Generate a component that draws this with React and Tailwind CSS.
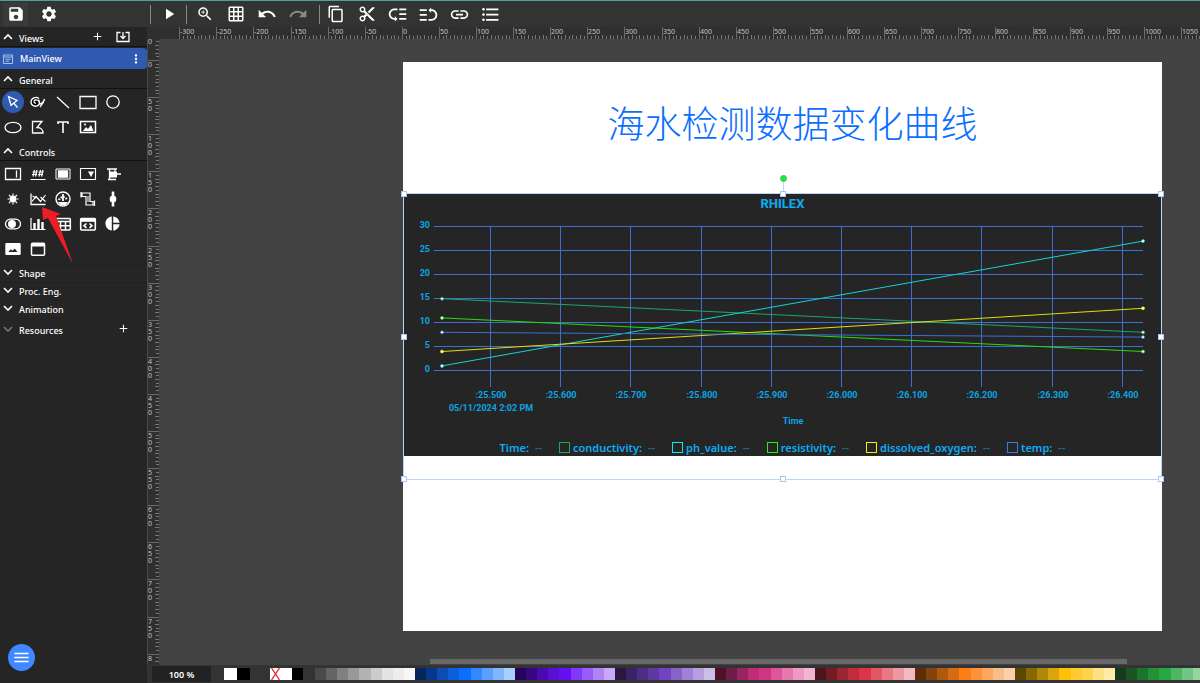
import {
  MdSave,
  MdSettings,
  MdPlayArrow,
  MdZoomIn,
  MdGridOn,
  MdUndo,
  MdRedo,
  MdContentCopy,
  MdContentCut,
  MdLowPriority,
  MdLink,
  MdFormatListBulleted,
  MdPieChart,
  MdAdd,
  MdMoreVert,
  MdMenu,
} from "react-icons/md";
import clsx from "clsx";

// Ruler scale
const STEP = 37.1; // screen px for 50 canvas units
const MINOR = STEP / 10;

const SERIES = [
  { name: "conductivity", color: "#1aa866", from: 15, to: 8, box: "border-[#1aa866]" },
  { name: "ph_value", color: "#16d3d3", from: 1, to: 27, box: "border-[#0fe8f0]" },
  { name: "resistivity", color: "#27dd0b", from: 11, to: 4, box: "border-[#27f00b]" },
  { name: "dissolved_oxygen", color: "#dede10", from: 4, to: 13, box: "border-[#eeee10]" },
  { name: "temp", color: "#3d6fd1", from: 8, to: 7, box: "border-[#3d78e8]" },
];

const TIMES = [":25.500", ":25.600", ":25.700", ":25.800", ":25.900", ":26.000", ":26.100", ":26.200", ":26.300", ":26.400"];

const PALETTE = [
  ["#4a4a4a", "#646464", "#808080", "#999999", "#b3b3b3", "#cccccc", "#e3e3e3", "#ededed", "#f8f8f8"],
  ["#03265b", "#07378a", "#0b4db4", "#0c5fdb", "#0a6eff", "#3488ff", "#5c9fff", "#83b5ff", "#a9cfff"],
  ["#25045c", "#37077f", "#4a0ab0", "#5810d4", "#6610f2", "#8138f7", "#985df8", "#b084f6", "#c8a8f8"],
  ["#28183f", "#3a2468", "#4c2f85", "#5d39a0", "#7242c0", "#8862ca", "#a080d8", "#b59fdf", "#cbbfe8"],
  ["#4f1028", "#701c48", "#982460", "#be2d76", "#d03485", "#de5598", "#e678ae", "#ee98c4", "#f2b6d0"],
  ["#4c141c", "#741c26", "#9a2632", "#c02c3c", "#dd3545", "#e25664", "#e87882", "#ee98a2", "#f4bac4"],
  ["#5c2e08", "#86420c", "#ae5810", "#d66c12", "#fd7e14", "#fd9338", "#fda85e", "#f6be88", "#fcd0ac"],
  ["#5c4702", "#866804", "#b08706", "#daa50a", "#ffc107", "#ffcb30", "#ffd24e", "#ffe082", "#ffeaa8"],
  ["#133a1a", "#1b5524", "#1c732c", "#249038", "#28a745", "#4cb665", "#70c584", "#94d4a3", "#b8e3c2"],
];

function Glyph({ children, fill }) {
  return (
    <svg
      viewBox="0 0 18 18"
      className="h-[18px] w-[18px]"
      fill={fill ? "white" : "none"}
      stroke={fill ? "none" : "white"}
      strokeWidth="1.3"
      aria-hidden="true"
    >
      {children}
    </svg>
  );
}

const GENERAL = [
  {
    label: "Select",
    active: true,
    icon: <Glyph><path d="M4.500 3.500l8.500 4-6 4.800zM9.500 9.800l4 4.700" /></Glyph>,
  },
  {
    label: "Pencil",
    icon: (
      <Glyph>
        <circle cx="6" cy="9" r="3.600" fill="black" strokeWidth="0" />
        <path d="M10 5.500C7 3 2 5 2 9s5 5.500 7.500 3S9 6.500 6.500 7 5 10.500 7 10M9.500 7c1 0 .5 4 2 4s3.500-3 4-5c-.5 3-2.500 6-4.500 8" />
      </Glyph>
    ),
  },
  { label: "Line", icon: <Glyph><path d="M3 4l12 11" /></Glyph> },
  { label: "Rectangle", icon: <Glyph><path d="M1 3.500h16v12H1z" /></Glyph> },
  { label: "Circle", icon: <Glyph><circle cx="9" cy="9" r="6.200" /></Glyph> },
  { label: "Ellipse", icon: <Glyph><ellipse cx="9" cy="9.500" rx="8" ry="5.200" /></Glyph> },
  { label: "Path", icon: <Glyph><path d="M3.500 3.500H13L8 9.500c3.500-.2 6 2 6 5.500H3.500z" /></Glyph> },
  { label: "Text", icon: <Glyph><path d="M4 6V4h10v2M9 4v11" strokeWidth="1.600" /></Glyph> },
  {
    label: "Image",
    icon: (
      <Glyph>
        <path d="M1.500 3.500h15v11h-15z" strokeWidth="1.500" />
        <path d="M4 13l3-4 2 2 3-4 2.500 6z" fill="white" stroke="none" />
        <circle cx="6" cy="6.500" r="1" fill="white" stroke="none" />
      </Glyph>
    ),
  },
];

const CONTROLS = [
  { label: "Input", icon: <Glyph><path d="M1.500 3.500h15v11h-15zM12.500 5.500v7" /></Glyph> },
  { label: "Output", icon: <Glyph><path d="M5.500 5L4 11.500M8 5l-1.500 6.500M3.500 7h5M3 9.500h5M11.500 5L10 11.500M14 5l-1.500 6.500M9.500 7h5M9 9.500h5" strokeWidth="1.200" /><path d="M1.500 14.500h15" strokeWidth="1" /></Glyph> },
  { label: "Button", icon: <Glyph><path d="M2 4h14v10H2z" strokeWidth="1" /><path d="M4.500 6h9v6h-9z" fill="white" stroke="white" /></Glyph> },
  { label: "Combo box", icon: <Glyph><path d="M1.500 3.500h15v11h-15z" strokeWidth="1.100" /><path d="M9 6.500h6l-3 5.500z" fill="white" stroke="none" /></Glyph> },
  { label: "Slider", icon: <Glyph><path d="M3 4h10M5.500 4v11M4 14.500h8M11 4v3M13 9h4" /><path d="M5 6.500h8v6H5z" fill="white" stroke="none" /></Glyph> },
  {
    label: "Light",
    icon: (
      <Glyph>
        <circle cx="9" cy="9" r="3.400" fill="white" stroke="none" />
        <path d="M9 3.500v2M9 12.500v2M3.500 9h2M12.500 9h2M5 5l1.500 1.500M11.500 11.500L13 13M13 5l-1.500 1.500M6.500 11.500L5 13" strokeWidth="1.200" />
      </Glyph>
    ),
  },
  { label: "Chart", icon: <Glyph><path d="M2 3.500v11h14.500" /><path d="M3 11.500l4-5 4.500 5 5-6.500M3.500 6L7 8M11.500 7l5 4.500" strokeWidth="1.200" /></Glyph> },
  {
    label: "Gauge",
    icon: (
      <Glyph>
        <circle cx="9" cy="9" r="7" strokeWidth="1.400" />
        <path d="M5 10a4.200 4.200 0 0 1 8 0" strokeWidth="2" strokeDasharray="1.500 1.200" />
        <path d="M9 4v7" strokeWidth="1.800" />
        <path d="M4 12h10l-2.500 3h-5z" fill="white" stroke="none" />
      </Glyph>
    ),
  },
  {
    label: "Pipe",
    icon: (
      <Glyph>
        <path d="M3 3h8v8.500h3v3.500H7V6.500H3zM2 2v5.500M11 2.500v2M15.500 10.500V16M7 15h8" strokeWidth="1.200" />
        <path d="M9 6v6" strokeWidth="1" />
      </Glyph>
    ),
  },
  { label: "Progress", icon: <Glyph><path d="M9 1.500v15" strokeWidth="2.600" /><rect x="5.800" y="5.800" width="6.400" height="6.400" rx="2.500" fill="white" stroke="none" /></Glyph> },
  {
    label: "Switch",
    icon: (
      <Glyph>
        <rect x="1.500" y="4.200" width="15" height="9.600" rx="4.800" />
        <circle cx="8" cy="9" r="4" fill="white" stroke="none" />
      </Glyph>
    ),
  },
  { label: "Bar chart", icon: <Glyph><path d="M2 3v11.500h14.500" strokeWidth="1.200" /><path d="M5.500 14V8M9.500 14V4M13.500 14V7" strokeWidth="2.400" /></Glyph> },
  { label: "Table", icon: <Glyph><rect x="1.700" y="3.500" width="14.600" height="11.500" rx="1" strokeWidth="1.600" /><path d="M2 6.500h14M2 10.700h14M6.500 6v9M11.500 6v9" strokeWidth="1.500" /></Glyph> },
  {
    label: "Iframe",
    icon: (
      <Glyph>
        <rect x="1.700" y="3.500" width="14.600" height="11.500" rx="1" strokeWidth="1.600" />
        <path d="M1.500 3h15v3.800h-15z" fill="white" stroke="none" />
        <path d="M7.500 8.500L5 10.700l2.500 2.200M10.500 8.500L13 10.700l-2.500 2.200" strokeWidth="1.600" />
      </Glyph>
    ),
  },
  { label: "Pie chart", icon: <MdPieChart className="h-[17px] w-[17px]" /> },
  { label: "Picture", icon: <Glyph fill><path fillRule="evenodd" d="M2.500 3h13a1.200 1.200 0 0 1 1.200 1.200v9.600a1.200 1.200 0 0 1-1.200 1.200h-13a1.200 1.200 0 0 1-1.200-1.200V4.200A1.200 1.200 0 0 1 2.500 3zM4.500 12h9l-2.800-3.500-2.200 2.300-1.700-1.500z" /></Glyph> },
  { label: "Panel", icon: <Glyph><rect x="2.500" y="3.200" width="13" height="12" rx="1" strokeWidth="1.500" /><path d="M2 3h14v3.500H2z" fill="white" stroke="none" /></Glyph> },
];

function Chevron({ open, dim }) {
  return (
    <svg viewBox="0 0 10 10" className="mb-1 h-[10px] w-[10px] shrink-0" fill="none" stroke={dim ? "#777" : "white"} strokeWidth="1.600" aria-hidden="true">
      <path d={open ? "M1 7l4-4 4 4" : "M1 3l4 4 4-4"} />
    </svg>
  );
}

function SectionHeader({ title, children }) {
  return (
    <div className="flex h-5 items-center border-b border-[#111] pt-1 pl-[3px]">
      <button className="flex items-center gap-[6px]">
        <Chevron open />
        {title}
      </button>
      {children}
    </div>
  );
}

function ClosedSection({ title }) {
  return (
    <button className="flex h-[18px] w-full items-center gap-[6px] border-t border-[#212121] pl-[3px]">
      <Chevron />
      {title}
    </button>
  );
}

function ToolGrid({ tools }) {
  return (
    <div className="grid w-[125px] grid-cols-5 pb-[2px]">
      {tools.map((tool) => (
        <button key={tool.label} aria-label={tool.label} className="flex h-[25px] items-center justify-center">
          <span className={clsx("flex h-[22px] w-[22px] items-center justify-center rounded-full", tool.active && "bg-[#2f5ab2]")}>
            {tool.icon}
          </span>
        </button>
      ))}
    </div>
  );
}

function Sidebar() {
  return (
    <aside className="relative flex w-[147px] shrink-0 flex-col bg-[#252525] text-[9px] font-medium">
      <SectionHeader title="Views">
        <button aria-label="Add view" className="mb-1 ml-auto"><MdAdd className="h-[13px] w-[13px]" /></button>
        <button aria-label="Import view" className="mr-[17px] mb-1 ml-3">
          <svg viewBox="0 0 14 12" className="h-[12px] w-[14px]" fill="none" stroke="white" strokeWidth="1.300" aria-hidden="true">
            <path d="M4.500 1.500H1v9h12v-9H9.500M7 1v6M4.500 5L7 7.500 9.500 5" />
          </svg>
        </button>
      </SectionHeader>
      <div className="mt-px flex h-[21px] items-center rounded-r-sm bg-[#2f5ab0] pl-[3px]">
        <svg viewBox="0 0 10 10" className="h-[10px] w-[10px]" fill="none" stroke="#a9c0ea" aria-hidden="true">
          <path d="M.5 1h9v8.500h-9zM.5 3h9M2.500 5.200h5M2.500 7.200h3.500" />
        </svg>
        <a href="#main" className="ml-[7px]">MainView</a>
        <button aria-label="View menu" className="mr-1 ml-auto"><MdMoreVert className="h-[14px] w-[14px]" /></button>
      </div>

      <SectionHeader title="General" />
      <ToolGrid tools={GENERAL} />
      <SectionHeader title="Controls" />
      <ToolGrid tools={CONTROLS} />

      <div className="mt-px">
        <ClosedSection title="Shape" />
        <ClosedSection title="Proc. Eng." />
        <ClosedSection title="Animation" />
        <div className="flex h-6 items-center border-t border-[#212121] pl-[3px]">
          <button className="flex items-center gap-[6px]">
            <Chevron dim />
            Resources
          </button>
          <button aria-label="Add resource" className="mr-[17px] mb-1 ml-auto"><MdAdd className="h-[13px] w-[13px]" /></button>
        </div>
      </div>

      <button aria-label="Menu" className="mt-auto mb-3 ml-2 flex h-[27px] w-[27px] items-center justify-center rounded-full bg-[#3f88ff]">
        <MdMenu className="h-[19px] w-[19px]" />
      </button>

      {/* pointer to the chart control */}
      <svg viewBox="0 0 34 60" className="absolute top-[179px] left-[41px] h-[60px] w-[34px]" aria-hidden="true">
        <path d="M1 1l1 13 5-2 25 46L15 10l5-2z" fill="#ee1c25" />
      </svg>
    </aside>
  );
}

function Separator() {
  return <div className="h-[19px] w-px bg-[#8a8a8a]" />;
}

function ToolButton({ label, dim, children }) {
  return (
    <button aria-label={label} className={clsx("flex h-6 w-[25px] shrink-0 items-center justify-center text-[18px]", dim && "text-[#8a8a8a]")}>
      {children}
    </button>
  );
}

function Toolbar() {
  return (
    <header className="flex h-[27px] shrink-0 items-center border-t border-[#4ba09c] bg-[#333]">
      <div className="flex w-[150px] shrink-0 items-center gap-2 pl-[3px]">
        <span className="bg-[#3a3a3a]"><ToolButton label="Save"><MdSave /></ToolButton></span>
        <ToolButton label="Settings"><MdSettings /></ToolButton>
      </div>
      <Separator />
      <div className="flex w-[35px] justify-center"><ToolButton label="Launch"><MdPlayArrow /></ToolButton></div>
      <Separator />
      <div className="flex w-[132px] items-center gap-[6px] pl-[5px]">
        <ToolButton label="Zoom"><MdZoomIn /></ToolButton>
        <ToolButton label="Grid"><MdGridOn /></ToolButton>
        <ToolButton label="Undo"><MdUndo className="text-[20px]" /></ToolButton>
        <ToolButton label="Redo" dim><MdRedo className="text-[20px]" /></ToolButton>
      </div>
      <Separator />
      <div className="flex items-center gap-[6px] pl-[3px]">
        <ToolButton label="Copy"><MdContentCopy /></ToolButton>
        <ToolButton label="Cut"><MdContentCut /></ToolButton>
        <ToolButton label="Send to back"><MdLowPriority className="text-[21px]" /></ToolButton>
        <ToolButton label="Bring to front"><MdLowPriority className="rotate-180 text-[21px]" /></ToolButton>
        <ToolButton label="Link"><MdLink className="text-[21px]" /></ToolButton>
        <ToolButton label="List"><MdFormatListBulleted className="text-[21px]" /></ToolButton>
      </div>
    </header>
  );
}

function range(from, to) {
  return Array.from({ length: to - from + 1 }, (_, i) => from + i);
}

function HorizontalRuler() {
  const zero = 254.800;
  return (
    <svg className="h-3 w-full shrink-0 bg-[#2f2f2f]" fill="#c4c4c4" aria-hidden="true">
      {range(-60, 500).map((i) => {
        const x = Math.round(zero + i * MINOR);
        const major = i % 10 === 0;
        return <rect key={i} x={x} y={major ? 0 : i % 2 ? 9 : 8} width="1" height="12" fill={major ? "#6a6a6a" : "#777"} />;
      })}
      {range(-6, 21).map((i) => (
        <text key={i} x={Math.round(zero + i * STEP) + 1} y="7" className="text-[7px]">{i * 50}</text>
      ))}
    </svg>
  );
}

function VerticalRuler() {
  const zero = 21;
  return (
    <svg className="h-full w-3 shrink-0 border-l border-[#4a4a4a] bg-[#2f2f2f]" fill="#c4c4c4" aria-hidden="true">
      {range(-5, 400).map((i) => {
        const y = Math.round(zero + i * MINOR);
        const major = i % 10 === 0;
        return <rect key={i} x={major ? 0 : i % 2 ? 8 : 7} y={y} width="12" height="1" fill={major ? "#6a6a6a" : "#777"} />;
      })}
      <text x="0" y="5" className="text-[7px]">0</text>
      {range(0, 16).map((i) =>
        String(i * 50).split("").slice(0, i === 16 ? 1 : 3).map((digit, n) => (
          <text key={`${i}-${n}`} x="0" y={Math.round(zero + i * STEP) + 7 + n * 7} className="text-[7px]">{digit}</text>
        ))
      )}
    </svg>
  );
}

function Plot() {
  const yOf = (v) => Math.round(158.400 - v * 4.800);
  const xOf = (i) => Math.round(87 + i * 70.200);
  return (
    <svg viewBox="0 0 759 226" className="block w-full font-['Roboto',sans-serif] text-[9px] font-bold" fill="#0ba4e4">
      {[0, 5, 10, 15, 20, 25, 30].map((v) => (
        <g key={v}>
          <rect x="31" y={yOf(v) - 1} width="709" height="1" fill="#3d6fd1" />
          <text x="27" y={yOf(v) + 1} textAnchor="end">{v}</text>
        </g>
      ))}
      {TIMES.map((time, i) => (
        <g key={time}>
          <rect x={xOf(i)} y="13" width="1" height="161" fill="#3d6fd1" />
          <text x={xOf(i) + 1} y="185" textAnchor="middle">{time}</text>
        </g>
      ))}
      <text x="88" y="198" textAnchor="middle">05/11/2024 2:02 PM</text>
      <text x="390" y="211" textAnchor="middle">Time</text>
      {SERIES.map((s) => (
        <g key={s.name} stroke={s.color}>
          <line x1="39" y1={157.700 - s.from * 4.800} x2="740" y2={157.700 - s.to * 4.800} strokeWidth="1" />
          <circle cx="39" cy={157.700 - s.from * 4.800} r="1.500" fill="white" strokeWidth=".7" />
          <circle cx="740" cy={157.700 - s.to * 4.800} r="1.500" fill="white" strokeWidth=".7" />
        </g>
      ))}
    </svg>
  );
}

function Chart() {
  return (
    <div className="border-t border-[#a9c6f5] bg-[#252525]">
      <h2 className="h-[19px] text-center font-['Roboto',sans-serif] text-[13px] leading-[19px] font-bold text-[#0aadf5]">RHILEX</h2>
      <Plot />
      <div className="flex h-[17px] items-center justify-center gap-[17px] text-[11px] leading-[17px] font-semibold text-[#0aadf5]">
        <span className="flex gap-[6px]">Time:<span className="text-[#0a719e]">--</span></span>
        {SERIES.map((s) => (
          <span key={s.name} className="flex items-center gap-[3px]">
            <span className={clsx("h-[11px] w-[11px] border", s.box)} />
            <span className="flex gap-[6px]">{s.name}:<span className="text-[#0a719e]">--</span></span>
          </span>
        ))}
      </div>
    </div>
  );
}

// Grips of the selection frame, placed on its corners and edges
const GRIPS = [
  "-top-[3px] -left-[3px]",
  "-top-[3px] left-1/2 -ml-[3px]",
  "-top-[3px] -right-[3px]",
  "top-1/2 -mt-[3px] -left-[3px]",
  "top-1/2 -mt-[3px] -right-[3px]",
  "-bottom-[3px] -left-[3px]",
  "-bottom-[3px] left-1/2 -ml-[3px]",
  "-bottom-[3px] -right-[3px]",
];

function Artboard() {
  return (
    <section className="mt-[23px] ml-[244px] h-[569px] w-[759px] shrink-0 bg-white">
      <h1 className="flex h-[131px] items-center justify-center pb-[10px] pl-5 font-['Noto_Sans_CJK_SC',sans-serif] text-[37px] font-light text-[#0a6eff]">
        海水检测数据变化曲线
      </h1>
      <div className="relative h-[287px]">
        <Chart />
        <div className="absolute inset-0 border border-[#bcd3fa]">
          <div className="absolute -top-[14px] left-1/2 h-[14px] w-px bg-[#bcd3fa]" />
          <div className="absolute -top-[19px] left-1/2 -ml-[3px] h-[7px] w-[7px] rounded-full border border-[#3fc08a] bg-[#1cf01c]" />
          {GRIPS.map((pos) => (
            <div key={pos} className={clsx("absolute h-[6px] w-[6px] border border-[#a9c6f5] bg-white", pos)} />
          ))}
        </div>
      </div>
    </section>
  );
}

function BottomBar() {
  return (
    <footer className="flex h-[18px] shrink-0 items-center overflow-hidden bg-[#333] pl-[5px]">
      <input
        aria-label="Zoom level"
        defaultValue="100 %"
        className="h-4 w-[59px] shrink-0 bg-[#222] text-center text-[9px] font-semibold text-white"
      />
      <div className="ml-[13px] flex h-3 w-[26px] shrink-0">
        <button aria-label="Fill colour" className="flex-1 bg-white" />
        <button aria-label="Stroke colour" className="flex-1 bg-black" />
      </div>
      <div className="ml-5 flex h-3 shrink-0">
        <button aria-label="No colour" className="w-[11px] bg-white">
          <svg viewBox="0 0 11 12" className="h-3 w-[11px]" stroke="#e8242c" strokeWidth="1.300" aria-hidden="true">
            <path d="M1.500 0l8 12M9.500 0l-8 12" />
          </svg>
        </button>
        <button aria-label="White" className="w-[11px] bg-white" />
        <button aria-label="Black" className="w-[11px] bg-black" />
      </div>
      <div className="ml-[12px] flex h-3">
        {PALETTE.map((group) => (
          <div key={group[0]} className="grid w-[100px] shrink-0 grid-cols-9">
            {group.map((color) => (
              <button key={color} aria-label={color} style={{ backgroundColor: color }} />
            ))}
          </div>
        ))}
      </div>
    </footer>
  );
}

export default function App() {
  return (
    <div className="flex h-screen flex-col overflow-hidden bg-[#333] font-['Noto_Sans','Open_Sans',sans-serif] text-white">
      <Toolbar />
      <div className="flex min-h-0 flex-1">
        <Sidebar />
        <main className="flex min-w-0 flex-1 flex-col">
          <HorizontalRuler />
          <div className="flex min-h-0 flex-1">
            <VerticalRuler />
            <div className="flex min-w-0 flex-1 flex-col overflow-hidden bg-[#434343]">
              <div className="min-h-0 flex-1 overflow-hidden">
                <Artboard />
              </div>
              <div className="mb-px ml-[26%] h-[5px] w-[67%] bg-[#686868]" />
            </div>
          </div>
          <BottomBar />
        </main>
      </div>
    </div>
  );
}
